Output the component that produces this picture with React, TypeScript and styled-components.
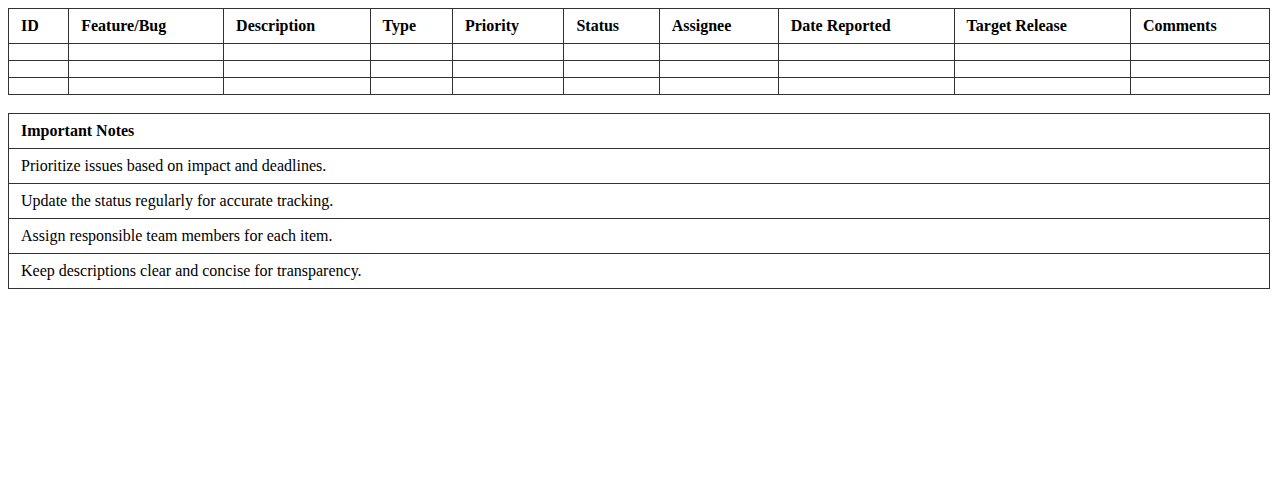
import React from "react";
import styled, { createGlobalStyle } from "styled-components";

const GlobalStyle = createGlobalStyle`
    body {
        margin: 8px;
        font-family: "Liberation Serif", "Times New Roman", serif;
        font-size: 16px;
        color: #000;
        background: #fff;
    }
`;

const Tabela = styled.table`
    width: 100%;
    border-collapse: collapse;
    margin-bottom: 18px;
`;

const Cabecalho = styled.th`
    border: 1px solid #333;
    padding: 8px 12px;
    text-align: left;
    font-weight: bold;
`;

const Celula = styled.td<{ $vazia?: boolean }>`
    border: 1px solid #333;
    padding: 8px 12px;
    text-align: left;
`;

const colunas = [
    "ID",
    "Feature/Bug",
    "Description",
    "Type",
    "Priority",
    "Status",
    "Assignee",
    "Date Reported",
    "Target Release",
    "Comments",
];

const notas = [
    "Prioritize issues based on impact and deadlines.",
    "Update the status regularly for accurate tracking.",
    "Assign responsible team members for each item.",
    "Keep descriptions clear and concise for transparency.",
];

export default function App() {
    return (
        <>
            <GlobalStyle />
            <Tabela>
                <thead>
                    <tr>
                        {colunas.map(c => <Cabecalho key={c}>{c}</Cabecalho>)}
                    </tr>
                </thead>
                <tbody>
                    {[0, 1, 2].map(linha =>
                        <tr key={linha}>
                            {colunas.map(c => <Celula key={c} />)}
                        </tr>
                    )}
                </tbody>
            </Tabela>
            <Tabela>
                <thead>
                    <tr><Cabecalho>Important Notes</Cabecalho></tr>
                </thead>
                <tbody>
                    {notas.map(n => <tr key={n}><Celula>{n}</Celula></tr>)}
                </tbody>
            </Tabela>
        </>
    );
}
